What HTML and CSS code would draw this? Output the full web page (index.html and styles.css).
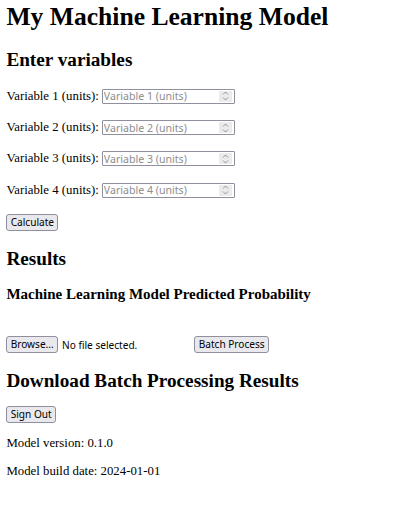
FILE: index.html
```html
<!DOCTYPE html>
<html>
<head>
<meta charset="utf-8">
<title>My Machine Learning Model</title>
<link rel="stylesheet" href="styles.css">
</head>
<body>
<h1>My Machine Learning Model</h1>
<h2>Enter variables</h2>
<form class="vars">
  <p class="row"><label>Variable 1 (units):</label><span class="num"><input type="text" placeholder="Variable 1 (units)"><span class="spin"><svg width="7" height="10" viewBox="0 0 7 10"><path d="M1 3.5 L3.5 1 L6 3.5 M1 6.5 L3.5 9 L6 6.5" fill="none" stroke="#8a8a8a" stroke-width="0.9"/></svg></span></span></p>
  <p class="row"><label>Variable 2 (units):</label><span class="num"><input type="text" placeholder="Variable 2 (units)"><span class="spin"><svg width="7" height="10" viewBox="0 0 7 10"><path d="M1 3.5 L3.5 1 L6 3.5 M1 6.5 L3.5 9 L6 6.5" fill="none" stroke="#8a8a8a" stroke-width="0.9"/></svg></span></span></p>
  <p class="row"><label>Variable 3 (units):</label><span class="num"><input type="text" placeholder="Variable 3 (units)"><span class="spin"><svg width="7" height="10" viewBox="0 0 7 10"><path d="M1 3.5 L3.5 1 L6 3.5 M1 6.5 L3.5 9 L6 6.5" fill="none" stroke="#8a8a8a" stroke-width="0.9"/></svg></span></span></p>
  <p class="row"><label>Variable 4 (units):</label><span class="num"><input type="text" placeholder="Variable 4 (units)"><span class="spin"><svg width="7" height="10" viewBox="0 0 7 10"><path d="M1 3.5 L3.5 1 L6 3.5 M1 6.5 L3.5 9 L6 6.5" fill="none" stroke="#8a8a8a" stroke-width="0.9"/></svg></span></span></p>
  <div class="action calc"><button type="button" class="btn">Calculate</button></div>
</form>
<h2>Results</h2>
<h3>Machine Learning Model Predicted Probability</h3>
<div class="result"></div>
<div class="batch">
  <span class="file"><button type="button" class="btn">Browse...</button><span class="filename">No file selected.</span></span>
  <button type="button" class="btn">Batch Process</button>
</div>
<h2 class="download">Download Batch Processing Results</h2>
<div class="action signout"><button type="button" class="btn">Sign Out</button></div>
<p class="meta">Model version: 0.1.0</p>
<p class="meta">Model build date: 2024-01-01</p>
</body>
</html>
```
FILE: styles.css
```css
html { background: #fff; }
body {
  margin: 2px 6.4px 6.4px;
  font-family: "Liberation Serif", "Times New Roman", serif;
  font-size: 12.8px;
  color: #000;
}
h1 {
  font-size: 25.6px;
  font-weight: bold;
  margin: 0 0 17px;
}
h2 {
  font-size: 19.2px;
  font-weight: bold;
  margin: 16px 0;
}
h3 {
  font-size: 15px;
  font-weight: bold;
  margin: 14.5px 0 15px;
}
p { margin: 12.8px 0; }
.row {
  display: flex;
  align-items: center;
  gap: 3px;
  height: 18.5px;
  margin: 12.8px 0;
}
.num {
  display: inline-flex;
  align-items: center;
  width: 131px;
  height: 13px;
  border: 1px solid #8f8f9d;
  border-radius: 1px;
  background: #fff;
  box-sizing: content-box;
}
.num input {
  flex: 1;
  min-width: 0;
  border: 0;
  padding: 0 0 0 1px;
  margin: 0;
  height: 13px;
  font-family: "Noto Sans", "Open Sans", sans-serif;
  font-size: 10.6px;
  color: #000;
  background: transparent;
  outline: none;
}
.num input::placeholder { color: #8d8d8d; }
.spin {
  width: 13px;
  height: 11px;
  margin-right: 2px;
  background: #ebebeb;
  display: flex;
  align-items: center;
  justify-content: center;
}
.btn {
  font-family: "Noto Sans", "Open Sans", sans-serif;
  font-size: 10.1px;
  line-height: 13px;
  color: #000;
  background: #e9e9ed;
  border: 1px solid #8f8f9d;
  border-radius: 3px;
  padding: 1px 3.3px;
  margin: 0;
}
.action { margin: 12.8px 0; }
.calc { margin: 14.5px 0 17px; }
.signout { margin-bottom: 13.8px; }
.result { height: 5.5px; margin: 12.8px 0; }
.batch { display: flex; align-items: center; margin: 12.8px 0 16.5px; }
.file { display: inline-flex; align-items: center; width: 188px; }
.filename {
  font-family: "Noto Sans", "Open Sans", sans-serif;
  font-size: 10.1px;
  margin-left: 4px;
}
h2.download { margin-bottom: 14px; }
.meta { margin: 12.8px 0; }
```
